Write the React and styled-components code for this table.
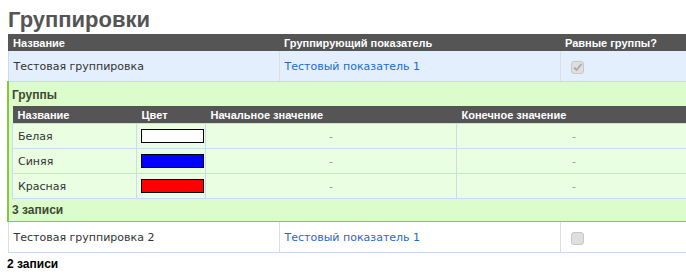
import React from "react";
import styled, { createGlobalStyle } from "styled-components";

const groupings = [
  {
    name: "Тестовая группировка",
    indicator: "Тестовый показатель 1",
    equal: true,
    groups: [
      { name: "Белая", color: "#ffffff" },
      { name: "Синяя", color: "#0000ff" },
      { name: "Красная", color: "#ff0000" },
    ],
  },
  {
    name: "Тестовая группировка 2",
    indicator: "Тестовый показатель 1",
    equal: false,
    groups: null,
  },
];

const GlobalStyle = createGlobalStyle`
  html, body {
    margin: 0;
    padding: 0;
    overflow: hidden;
    background: #fff;
  }
  body {
    padding: 0 0 0 7px;
    font-family: "DejaVu Sans", Verdana, sans-serif;
    font-size: 11px;
    color: #333;
  }
`;

export default function App() {
  return (
    <>
      <GlobalStyle />
      <Title>Группировки</Title>
      <Grid>
        <colgroup>
          <col style={{ width: 271 }} />
          <col style={{ width: 281 }} />
          <col />
        </colgroup>
        <thead>
          <tr>
            <Th>Название</Th>
            <Th>Группирующий показатель</Th>
            <Th>Равные группы?</Th>
          </tr>
        </thead>
        <tbody>
          {groupings.map((g) => (
            <React.Fragment key={g.name}>
              <Row $open={!!g.groups}>
                <Td $open={!!g.groups}>{g.name}</Td>
                <Td $open={!!g.groups}><Link href="#">{g.indicator}</Link></Td>
                <Td $open={!!g.groups}>
                  <Check>{g.equal && <CheckMark />}</Check>
                </Td>
              </Row>
              {g.groups && (
                <tr>
                  <Groups colSpan={3}>
                    <Caption>Группы</Caption>
                    <Inner>
                      <colgroup>
                        <col style={{ width: 124 }} />
                        <col style={{ width: 69 }} />
                        <col style={{ width: 251 }} />
                        <col />
                      </colgroup>
                      <thead>
                        <tr>
                          <Th>Название</Th>
                          <Th>Цвет</Th>
                          <Th>Начальное значение</Th>
                          <Th>Конечное значение</Th>
                        </tr>
                      </thead>
                      <tbody>
                        {g.groups.map((grp) => (
                          <tr key={grp.name}>
                            <GroupTd>{grp.name}</GroupTd>
                            <GroupTd $swatch><Swatch $color={grp.color} /></GroupTd>
                            <GroupTd $center><Dash>-</Dash></GroupTd>
                            <GroupTd $center><Dash>-</Dash></GroupTd>
                          </tr>
                        ))}
                      </tbody>
                    </Inner>
                    <Count $inner>{g.groups.length} записи</Count>
                  </Groups>
                </tr>
              )}
            </React.Fragment>
          ))}
        </tbody>
      </Grid>
      <Count>{groupings.length} записи</Count>
    </>
  );
}

function CheckMark() {
  return (
    <svg width="11" height="11" viewBox="0 0 11 11">
      <path d="M2 5.5 L4.5 8 L9.5 2" fill="none" stroke="#a9a9a9" strokeWidth="1.8" />
    </svg>
  );
}

const Title = styled.h1`
  margin: 0 0 2px 1px;
  padding-top: 7px;
  font-family: "Liberation Sans", Arial, sans-serif;
  font-size: 22px;
  line-height: 25px;
  font-weight: bold;
  color: #555;
`;

const Grid = styled.table`
  width: 690px;
  table-layout: fixed;
  border-collapse: collapse;
`;

const Th = styled.th`
  height: 17px;
  padding: 0 5px;
  background: #555;
  color: #fff;
  font-family: "Liberation Sans", Arial, sans-serif;
  font-size: 11px;
  font-weight: bold;
  text-align: left;
  white-space: nowrap;
`;

const Row = styled.tr`
  background: ${(p) => (p.$open ? "#e3effd" : "#fff")};
`;

const Td = styled.td`
  height: 30px;
  padding: 0 5px;
  border-bottom: 1px solid #c5dbf5;
  &:first-child {
    border-left: 1px solid ${(p) => (p.$open ? "#c5dbf5" : "#ddd")};
  }
  & + & {
    border-left: 1px solid ${(p) => (p.$open ? "#c5dbf5" : "#ddd")};
  }
`;

const Link = styled.a`
  color: #1b6bd2;
  text-decoration: none;
`;

const Check = styled.span`
  display: inline-flex;
  align-items: center;
  justify-content: center;
  width: 13px;
  height: 13px;
  margin: 2px 0 0 5px;
  box-sizing: border-box;
  border: 1px solid #c8c8c8;
  border-radius: 3px;
  background: #e0dfdd;
  vertical-align: middle;
`;

const Groups = styled.td`
  padding: 0 0 0 3px;
  background: #dcfccc;
  border-left: 2px solid #84c83f;
  border-bottom: 1px solid #84c83f;
`;

const Caption = styled.div`
  height: 24px;
  line-height: 27px;
  font-family: "Liberation Sans", Arial, sans-serif;
  font-size: 12px;
  font-weight: bold;
  color: #3e4a33;
`;

const Inner = styled.table`
  width: 680px;
  table-layout: fixed;
  border-collapse: collapse;
`;

const GroupTd = styled.td`
  height: 24px;
  padding: ${(p) => (p.$swatch ? "0 0 0 4px" : "0 5px")};
  background: #eafee2;
  border: 1px solid #c8dcf6;
  text-align: ${(p) => (p.$center ? "center" : "left")};
  color: #333;
`;

const Swatch = styled.div`
  width: 63px;
  height: 14px;
  box-sizing: border-box;
  border: 1px solid #000;
  background: ${(p) => p.$color};
`;

const Dash = styled.span`
  color: #999;
`;

const Count = styled.div`
  height: 22px;
  line-height: 22px;
  font-family: "Liberation Sans", Arial, sans-serif;
  font-size: 12px;
  font-weight: bold;
  color: ${(p) => (p.$inner ? "#3e4a33" : "#000")};
`;
